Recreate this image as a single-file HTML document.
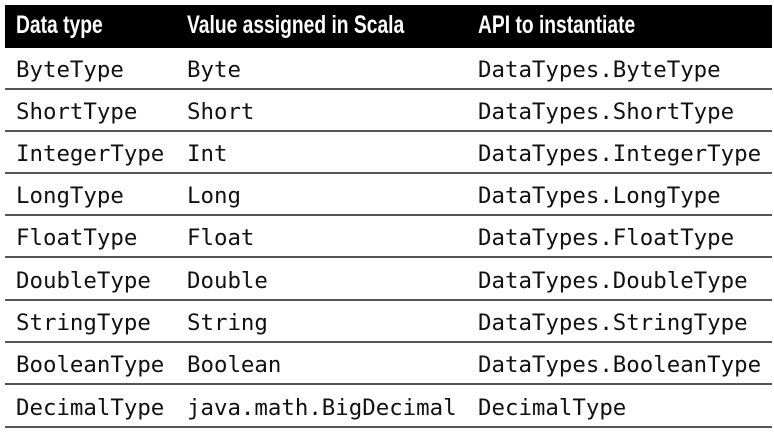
<!DOCTYPE html>
<html><head><style>
body{margin:0;background:#fff;width:774px;height:434px;overflow:hidden;position:relative}
.hd{position:absolute;left:5px;top:5px;width:767px;height:43px;background:#000}
.h{position:absolute;top:11px;color:#fff;font:bold 25px "Liberation Sans",sans-serif;transform:scaleX(0.77);transform-origin:0 0;white-space:nowrap}
.row{position:absolute;left:5px;width:767px;height:42px;border-bottom:2px solid #555;box-sizing:border-box}
.c{position:absolute;top:9px;font:22.4px "DejaVu Sans Mono","Liberation Mono",monospace;color:#111;white-space:nowrap}
</style></head><body>
<div class="hd"></div>
<div class="h" style="left:16px">Data type</div>
<div class="h" style="left:187px">Value assigned in Scala</div>
<div class="h" style="left:478px">API to instantiate</div>
<div class="row" style="top:48px"><span class="c" style="left:11px">ByteType</span><span class="c" style="left:182px">Byte</span><span class="c" style="left:473px">DataTypes.ByteType</span></div>
<div class="row" style="top:90px"><span class="c" style="left:11px">ShortType</span><span class="c" style="left:182px">Short</span><span class="c" style="left:473px">DataTypes.ShortType</span></div>
<div class="row" style="top:132px"><span class="c" style="left:11px">IntegerType</span><span class="c" style="left:182px">Int</span><span class="c" style="left:473px">DataTypes.IntegerType</span></div>
<div class="row" style="top:174px"><span class="c" style="left:11px">LongType</span><span class="c" style="left:182px">Long</span><span class="c" style="left:473px">DataTypes.LongType</span></div>
<div class="row" style="top:216px"><span class="c" style="left:11px">FloatType</span><span class="c" style="left:182px">Float</span><span class="c" style="left:473px">DataTypes.FloatType</span></div>
<div class="row" style="top:259px"><span class="c" style="left:11px">DoubleType</span><span class="c" style="left:182px">Double</span><span class="c" style="left:473px">DataTypes.DoubleType</span></div>
<div class="row" style="top:301px"><span class="c" style="left:11px">StringType</span><span class="c" style="left:182px">String</span><span class="c" style="left:473px">DataTypes.StringType</span></div>
<div class="row" style="top:343px"><span class="c" style="left:11px">BooleanType</span><span class="c" style="left:182px">Boolean</span><span class="c" style="left:473px">DataTypes.BooleanType</span></div>
<div class="row" style="top:386px"><span class="c" style="left:11px">DecimalType</span><span class="c" style="left:182px">java.math.BigDecimal</span><span class="c" style="left:473px">DecimalType</span></div>
</body></html>
